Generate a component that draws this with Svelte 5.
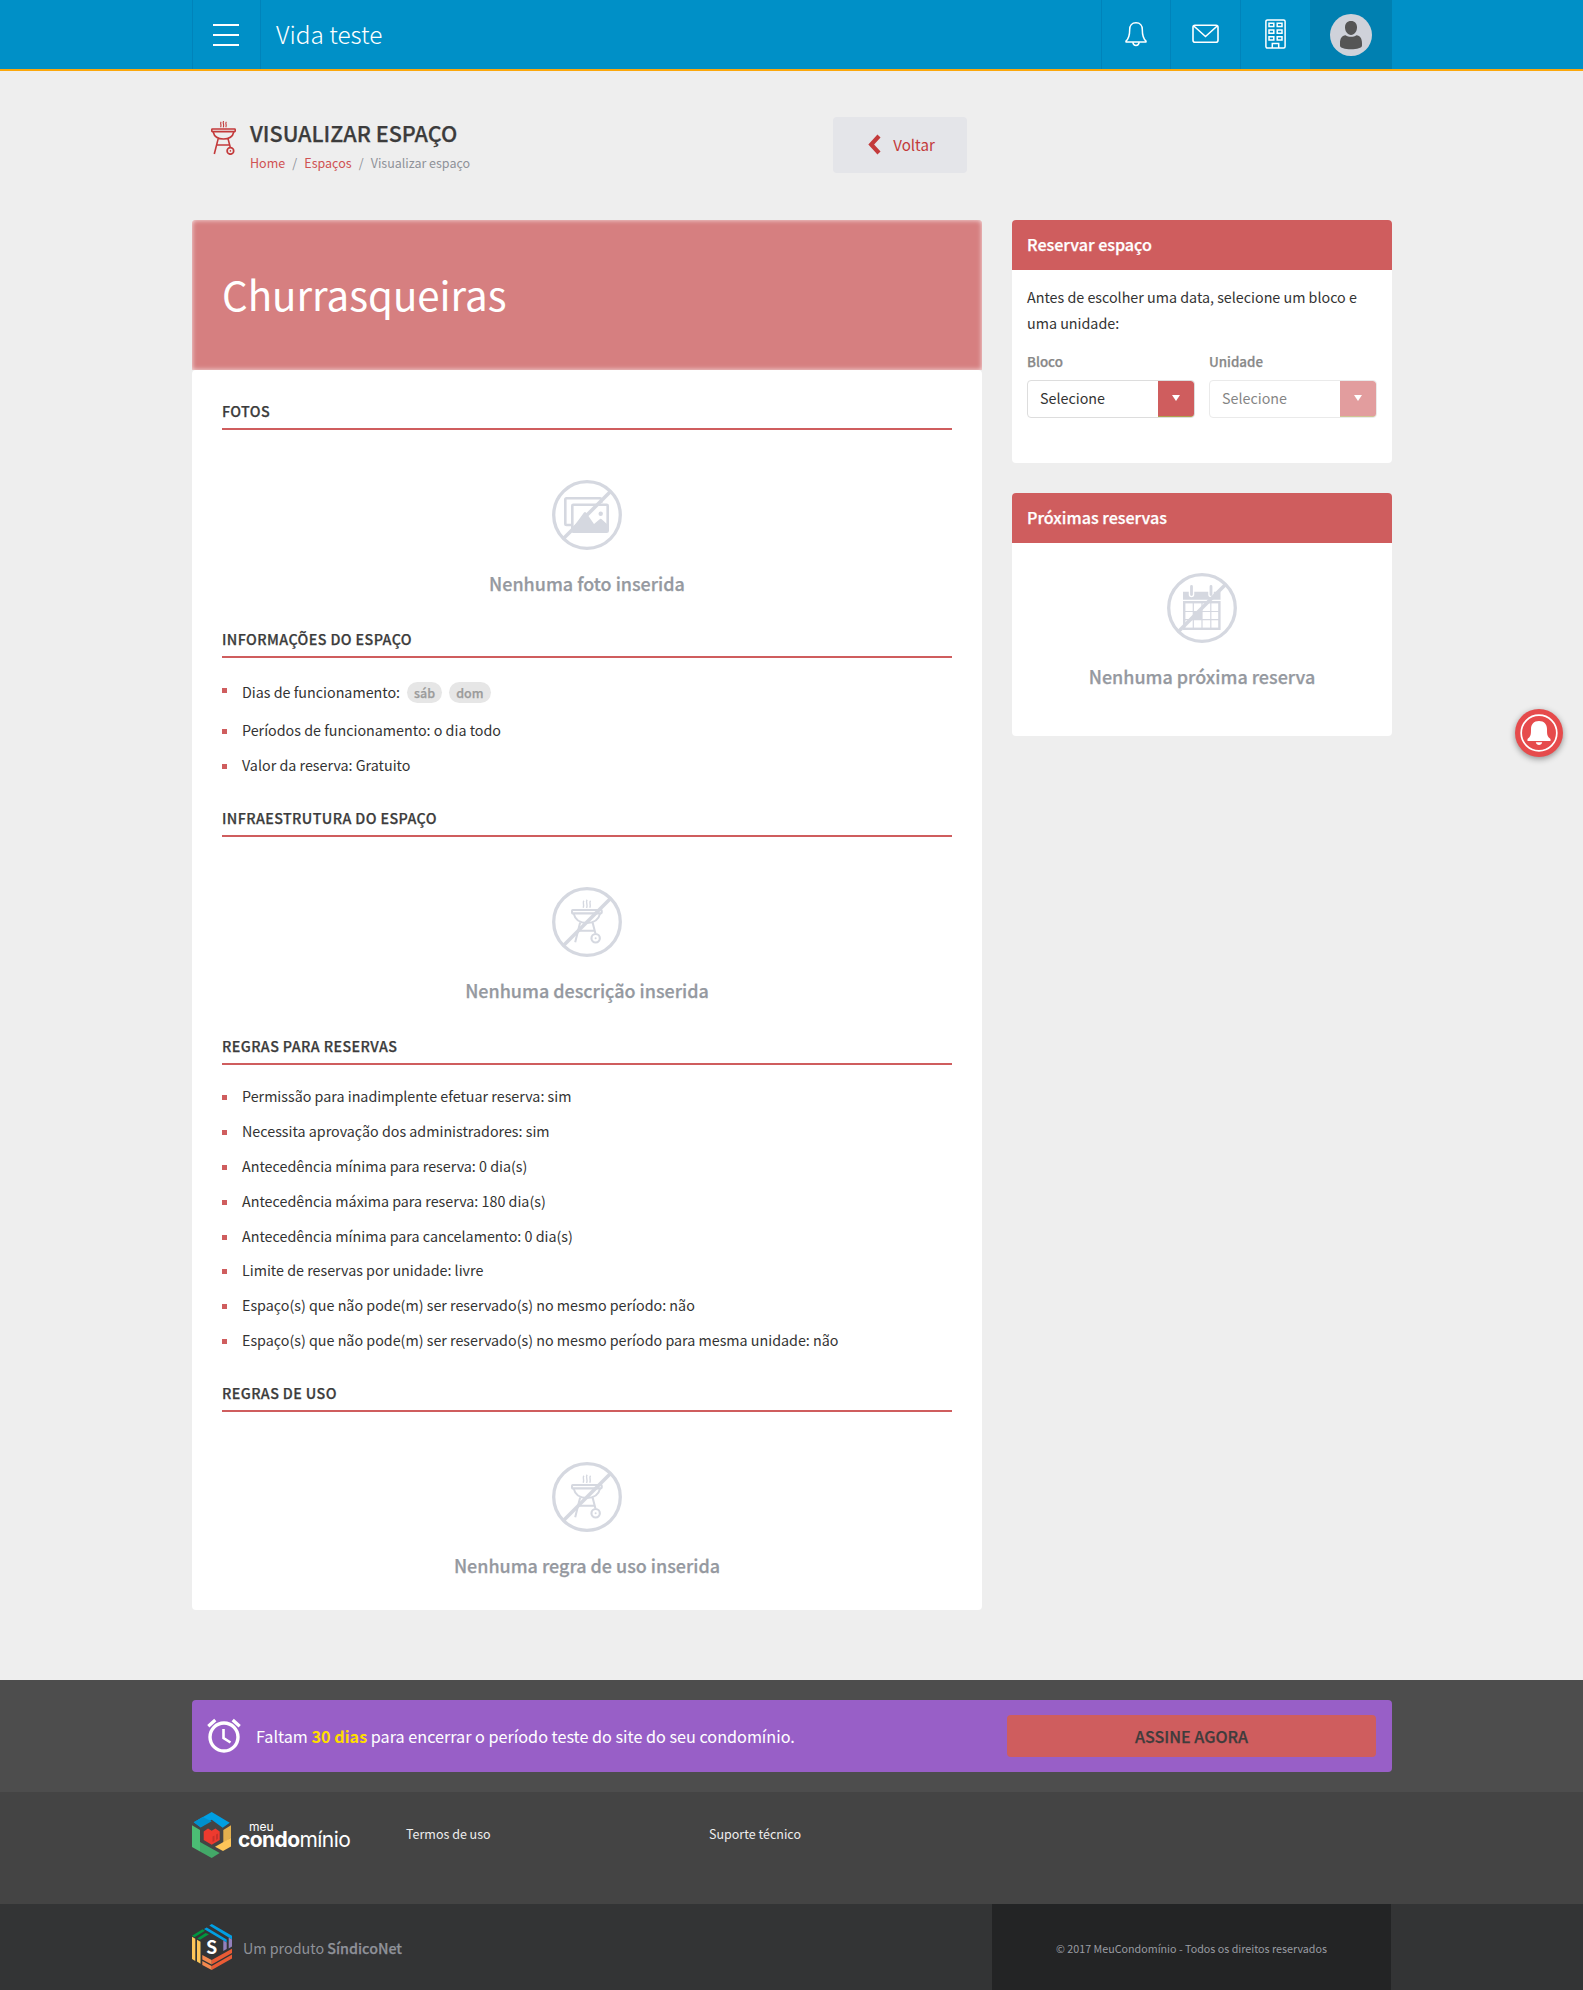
<script>
  const rules = [
    'Permissão para inadimplente efetuar reserva: sim',
    'Necessita aprovação dos administradores: sim',
    'Antecedência mínima para reserva: 0 dia(s)',
    'Antecedência máxima para reserva: 180 dia(s)',
    'Antecedência mínima para cancelamento: 0 dia(s)',
    'Limite de reservas por unidade: livre',
    'Espaço(s) que não pode(m) ser reservado(s) no mesmo período: não',
    'Espaço(s) que não pode(m) ser reservado(s) no mesmo período para mesma unidade: não'
  ];
  const days = ['sáb', 'dom'];
</script>

{#snippet grill()}
  <g fill="none" stroke="currentColor" stroke-width="1.6">
    <path d="M10.200 .8c-1.500 1.500.6 2.700-.6 5.400M12.700 0c-1.500 1.900.8 3.200-.4 6.400M15.400 .8c-1.500 1.500.6 2.700-.6 5.400" stroke-width="1.100" />
    <rect x=".8" y="8" width="23.4" height="2.6" rx=".6" />
    <path d="M2.2 11c1 4.4 4.600 7 10.300 7s9.300-2.600 10.300-7" />
    <path d="M7.200 17.600L3.300 33M17 17.600l2.200 8.400M6 24h12.600" />
    <circle cx="19.400" cy="29.900" r="3.300" stroke-width="1.700" />
  </g>
  <circle cx="19.4" cy="29.9" r=".8" fill="currentColor" />
{/snippet}

{#snippet empty(kind, label)}
  <div class="empty">
    <svg width="70" height="70" viewBox="0 0 70 70" color="#d5d8e0">
      {#if kind === 'photo'}
        <path d="M19 45h-4.500q-1.200 0-1.200-1.200V19.500q0-1.200 1.200-1.200H48q1.200 0 1.200 1.200V23" fill="none" stroke="currentColor" stroke-width="2.600" />
        <rect x="20.300" y="24.700" width="35.400" height="27" rx="1" fill="#fff" stroke="currentColor" stroke-width="2.600" />
        <path d="M20 49L32 32.500q1-.8 2 0L42 44l6-5q.7-.5 1.400 0L56 45v7H20z" fill="currentColor" />
        <circle cx="48.700" cy="33.700" r="2.200" fill="currentColor" />
      {:else if kind === 'calendar'}
        <path d="M16 18.700h37.500v8H16z" fill="currentColor" />
        <path d="M24.500 13.500v8M44 13.500v8" stroke="#fff" stroke-width="5.500" stroke-linecap="round" />
        <path d="M24.500 13.500v8M44 13.500v8" stroke="currentColor" stroke-width="2.800" stroke-linecap="round" />
        <rect x="17.200" y="29.200" width="35.200" height="26.600" fill="none" stroke="currentColor" stroke-width="2.400" />
        <path d="M26.300 29v27M35 29v27M43.800 29v27M17 38.500h36M17 46.600h36" stroke="currentColor" stroke-width="1.200" />
        <path d="M26.300 38.500H35v8.100h-8.700z" fill="currentColor" />
      {:else}
        <g transform="translate(19 12.700) scale(1.270 1.290)">{@render grill()}</g>
      {/if}
      <circle cx="35" cy="35" r="33.300" fill="none" stroke="currentColor" stroke-width="3.300" />
      <path d="M11.500 58.500l47-47" stroke="currentColor" stroke-width="3.500" />
    </svg>
    <p>{label}</p>
  </div>
{/snippet}

<header class="top">
  <div class="wrap bar">
    <button class="menu" aria-label="Menu"><i></i><i></i><i></i></button>
    <div class="site">Vida teste</div>
    <nav class="tools">
      <a class="tool" href="#a" aria-label="Avisos">
        <svg width="22" height="26" viewBox="0 0 22 26" fill="none" stroke="#fff" stroke-width="1.500" stroke-linejoin="round">
          <path d="M11 1.800c-4.200 0-6.300 3-6.300 6.600 0 6-.7 9-3.700 11.600v1h20v-1c-3-2.600-3.700-5.600-3.700-11.600 0-3.600-2.100-6.600-6.300-6.600z" />
          <path d="M7.800 21.200c.3 2.100 1.500 3.300 3.200 3.300s2.900-1.200 3.200-3.300" />
        </svg>
      </a>
      <a class="tool" href="#m" aria-label="Mensagens">
        <svg width="27" height="20" viewBox="0 0 27 20" fill="none" stroke="#fff" stroke-width="1.600">
          <rect x="1" y="1.300" width="25" height="17" rx="2" />
          <path d="M1.800 2l11.700 10.500L25.200 2" />
        </svg>
      </a>
      <a class="tool" href="#b" aria-label="Condomínio">
        <svg width="21" height="30" viewBox="0 0 21 30" fill="none" stroke="#fff" stroke-width="1.500">
          <rect x=".9" y=".9" width="19.200" height="28.200" rx="1.500" />
          <path d="M4 4.200h4.800v3.300H4zM12.200 4.200H17v3.300h-4.800zM4 11h4.800v3.300H4zM12.200 11H17v3.300h-4.800zM4 17.800h4.800v3.300H4zM12.200 17.800H17v3.300h-4.800zM7.300 29v-4.500h6.400V29" />
        </svg>
      </a>
      <a class="tool user" href="#u" aria-label="Perfil">
        <svg width="42" height="42" viewBox="0 0 42 42">
          <circle cx="21" cy="21" r="21" fill="#cfd2da" />
          <path d="M21 7c3.800 0 6 2.600 6 6.300 0 4-2.500 7.700-6 7.700s-6-3.700-6-7.700C15 9.600 17.200 7 21 7z" fill="#555" />
          <path d="M15.600 21.300c3 2 7.800 2 10.800 0 4 .6 5.600 3.400 5.600 8v2.200c0 2.500-5 3.700-11 3.700s-11-1.200-11-3.700v-2.200c0-4.600 1.600-7.400 5.600-8z" fill="#555" />
        </svg>
      </a>
    </nav>
  </div>
</header>

<main class="wrap">
  <div class="heading">
    <svg class="page-icon" width="25" height="34" viewBox="0 0 25 34">{@render grill()}</svg>
    <div class="titles">
      <h1>VISUALIZAR ESPAÇO</h1>
      <div class="crumbs"><a href="#h">Home</a><span>/</span><a href="#e">Espaços</a><span>/</span>Visualizar espaço</div>
    </div>
    <a class="back" href="#v">
      <svg width="13" height="21" viewBox="0 0 13 21"><path d="M11 2L3.200 10.500 11 19" fill="none" stroke="#c33a3b" stroke-width="4.200" /></svg>
      Voltar
    </a>
  </div>

  <div class="columns">
    <article>
      <div class="hero">Churrasqueiras</div>
      <div class="content">
        <h2>FOTOS</h2>
        {@render empty('photo', 'Nenhuma foto inserida')}

        <h2>INFORMAÇÕES DO ESPAÇO</h2>
        <ul>
          <li class="days">Dias de funcionamento: {#each days as d}<span class="pill">{d}</span>{/each}</li>
          <li>Períodos de funcionamento: o dia todo</li>
          <li>Valor da reserva: Gratuito</li>
        </ul>

        <h2>INFRAESTRUTURA DO ESPAÇO</h2>
        {@render empty('grill', 'Nenhuma descrição inserida')}

        <h2>REGRAS PARA RESERVAS</h2>
        <ul>
          {#each rules as r}<li>{r}</li>{/each}
        </ul>

        <h2>REGRAS DE USO</h2>
        {@render empty('grill', 'Nenhuma regra de uso inserida')}
      </div>
    </article>

    <aside>
      <section class="panel">
        <h3>Reservar espaço</h3>
        <div class="form">
          <p>Antes de escolher uma data, selecione um bloco e uma unidade:</p>
          <div class="fields">
            <div class="field">
              <span class="label">Bloco</span>
              <div class="select"><span>Selecione</span><b><i></i></b></div>
            </div>
            <div class="field">
              <span class="label">Unidade</span>
              <div class="select off"><span>Selecione</span><b><i></i></b></div>
            </div>
          </div>
        </div>
      </section>
      <section class="panel next">
        <h3>Próximas reservas</h3>
        {@render empty('calendar', 'Nenhuma próxima reserva')}
      </section>
    </aside>
  </div>
</main>

<footer>
  <div class="trial">
    <div class="wrap banner">
      <svg width="34" height="35" viewBox="0 0 34 35" fill="none" stroke="#fff">
        <circle cx="17" cy="19" r="14" stroke-width="3.400" />
        <path d="M1.300 8.300l7-6.300M32.700 8.300l-7-6.300" stroke-width="3.300" />
        <path d="M16.500 11v9l7 4.500" stroke-width="2.600" />
      </svg>
      <p>Faltam <strong>30 dias</strong> para encerrar o período teste do site do seu condomínio.</p>
      <a class="cta" href="#s">ASSINE AGORA</a>
    </div>
  </div>
  <div class="links">
    <div class="wrap linkrow">
      <div class="brand">
        <svg width="40" height="46" viewBox="0 0 40 46">
          <path d="M1.700 10.300L19.700 0l18 10.700-7 5-11-7.900-11 7.500z" fill="#009fe3" />
          <path d="M1.700 10.300l9-5.200 9 4.200-11 6.200z" fill="#0090ce" />
          <path d="M0 13.300L8 18v21.500L0 35z" fill="#4bbd74" />
          <path d="M8 30l19.700 11-8 5L8 39.500z" fill="#43a868" />
          <path d="M31.300 18l7.700-4.700v12.500l-7.700 5.200z" fill="#e2b04e" />
          <path d="M39 25.800v8.700L31 39l-8-4.300z" fill="#fdc558" />
          <path d="M11.700 19.500l4.300-3 3.700 2.300 3.700-2.300 4.300 3V28l-8 4.700-8-4.700z" fill="#ee3a2e" />
          <path d="M20.500 24.500l2-1v5.500l-2 1zM24 22.500l2-1v5.500l-2 1z" fill="#c8302a" />
        </svg>
        <div class="word">
          <span class="small">meu</span>
          <span class="large"><b>condo</b>mínio</span>
        </div>
      </div>
      <a href="#t">Termos de uso</a>
      <a href="#st">Suporte técnico</a>
    </div>
  </div>
  <div class="legal">
    <div class="wrap legalrow">
      <svg width="40" height="46" viewBox="0 0 40 46">
        <path d="M0 11.700L10.500 5.300 13 6.800 2.500 13.300zM5.200 14.500L13.500 9l3.500 1.200-9 5.600z" fill="#009640" />
        <path d="M0 12.700l3.300 2V37L0 35zM5 15.700l3.500 2v22L5 37.500z" fill="#fdc558" />
        <path d="M17.300 1.500L19.800 0 40 11.700v3.800zM12 5l2.700-1.600L34.700 15.500v3z" fill="#009fe3" />
        <path d="M31.300 16.500l3.400 2V25l-3.400 2zM36.700 13.500l3.300 2v7l-3.300 2z" fill="#9280bd" />
        <path d="M19.700 36L40 24.800V29L19.700 40.500zM19.700 42L40 30.500v4L19.700 46z" fill="#ea5b35" />
        <path d="M10.300 31l9.400 5v4.500l-9.400-5zM10.300 37l9.400 5v4l-9.400-5z" fill="#f3894f" />
        <text class="mono" x="19.700" y="29.800" font-size="18" text-anchor="middle">S</text>
      </svg>
      <p>Um produto <strong>SíndicoNet</strong></p>
      <div class="copy">© 2017 MeuCondomínio - Todos os direitos reservados</div>
    </div>
  </div>
</footer>

<button class="float" aria-label="Notificações">
  <svg width="48" height="48" viewBox="0 0 48 48">
    <circle cx="24" cy="24" r="17.800" fill="none" stroke="#fff" stroke-width="1.700" />
    <path d="M24 12c-5.200 0-8 3.400-8 8 0 6-.3 7.500-3.500 10v2h23v-2c-3.200-2.500-3.500-4-3.500-10 0-4.600-2.800-8-8-8z" fill="#fff" />
    <path d="M20.800 33.300h6.400c-.4 1.800-1.600 2.700-3.200 2.700s-2.800-.9-3.200-2.700z" fill="#fff" />
  </svg>
</button>

<style>
  :global(body) {
    margin: 0;
    background: #eee;
    color: #333;
    font: 14.3px/24.8px 'Noto Sans CJK JP', 'Noto Sans', sans-serif;
  }
  :global(#app) { position: relative; }
  a { color: inherit; text-decoration: none; }
  p, h1, h2, h3, ul { margin: 0; padding: 0; }
  svg { display: block; flex: none; }
  button { border: 0; padding: 0; }
  .wrap { width: 1200px; margin: 0 auto; box-sizing: border-box; position: relative; left: .5px; }

  /* Demi-bold: the medium cut, thickened slightly */
  h1, h2, h3, .empty p, .label, .pill, .cta, .legalrow strong { font-weight: 500; -webkit-text-stroke: .25px currentColor; }

  .top { background: #0090c7; border-bottom: 2px solid #fba70b; }
  .bar { display: flex; height: 69px; }
  .menu {
    width: 69px; box-sizing: border-box; background: none;
    border: solid #0083ba; border-width: 0 1px;
    display: flex; flex-direction: column; justify-content: center; align-items: center; gap: 8px;
  }
  .menu i { width: 26px; height: 2px; background: #fff; margin-right: 1px; }
  .site { margin-left: 15px; color: #fff; font-size: 24.4px; font-weight: 300; line-height: 67px; }
  .tools { display: flex; margin-left: auto; }
  .tool {
    width: 70px; height: 69px; box-sizing: border-box; border-left: 1px solid #0083ba;
    display: flex; align-items: center; justify-content: center; padding-bottom: 1px;
  }
  .tool:first-child { width: 69px; }
  .tool.user { width: 82px; border: 0; background: #0080b1; padding: 1px 0 0 0; }

  .heading { display: flex; align-items: flex-start; padding: 46px 0 47px 19px; height: 56px; }
  .page-icon { color: #c33a3b; margin: 4px 14px 0 0; }
  .titles { flex: 1; }
  h1 { font-size: 21.600px; line-height: 32px; color: #3c3c3c; }
  .crumbs { font-size: 12.500px; line-height: 20px; margin-top: 4px; color: #8f9299; }
  .crumbs a { color: #d05253; }
  .crumbs span { margin: 0 7.100px; }
  .back {
    width: 134px; height: 56px; border-radius: 4px; background: #e4e5e9; margin-right: 425px;
    display: flex; align-items: center; justify-content: center; gap: 12px;
    font-size: 15.100px; color: #c33a3b; box-sizing: border-box; padding: 0 0 2px 3px;
  }

  .columns { display: flex; gap: 30px; align-items: flex-start; }
  article { width: 790px; }
  .hero {
    height: 150px; box-sizing: border-box; padding-left: 30px; border-radius: 4px 4px 0 0;
    background: #d67f80; box-shadow: inset 0 0 5px rgba(255, 255, 255, .8);
    color: #fff; font-size: 40.200px; line-height: 148px;
  }
  .content { background: #fff; border-radius: 4px; padding: 29px 30px 1px; }
  h2 {
    font-size: 14.300px; letter-spacing: .4px; line-height: 24px; color: #3c3c3c;
    padding-bottom: 5px; border-bottom: 2px solid #cf5d5e;
  }
  .empty { padding: 50px 0 30px; display: flex; flex-direction: column; align-items: center; }
  .empty p { margin-top: 19px; font-size: 17.950px; line-height: 28px; color: #9599a0; }
  ul { list-style: none; padding: 14.200px 0 22.920px; }
  li { height: 34.860px; display: flex; align-items: center; }
  li::before { content: ''; width: 5px; height: 5px; margin: 2px 15px 0 0; background: #cf5d5e; }
  li.days { height: 41.160px; }
  li.days::before { margin-top: -4px; }
  .pill {
    background: #e6e6e6; color: #9b9b9b; font-size: 12.500px; line-height: 21px; height: 21px;
    padding: 0 7px; border-radius: 11px; margin-left: 7px;
  }

  aside { width: 380px; display: flex; flex-direction: column; gap: 30px; }
  .panel { background: #fff; border-radius: 4px; height: 243px; overflow: hidden; }
  h3 { background: #cf5d5e; color: #fff; font-size: 16.100px; line-height: 49px; height: 50px; padding-left: 15px; }
  .form { padding: 14px 15px; }
  .form p { line-height: 26px; }
  .fields { display: flex; gap: 14px; margin-top: 15px; }
  .field { width: 168px; }
  .label { display: block; font-size: 13.350px; line-height: 22px; color: #888; }
  .select {
    display: flex; justify-content: space-between; height: 38px; box-sizing: border-box; margin-top: 7px;
    border: 1px solid #ddd; border-radius: 4px; overflow: hidden; line-height: 34px;
  }
  .select span { padding-left: 12px; }
  .select.off { opacity: .6; }
  .select b { width: 36px; background: #cf5d5e; border-bottom: 1px solid #b0a04e; border-radius: 0 3px 3px 0; display: flex; align-items: center; justify-content: center; }
  .select i { border: solid transparent; border-width: 6px 4.500px 0; border-top-color: #fff; margin-bottom: 1px; }
  .next .empty { padding-top: 30px; }

  .trial { background: #4d4d4d; padding: 20px 0; margin-top: 70px; }
  .banner {
    height: 72px; border-radius: 4px; background: #985fc7; color: #fff; padding: 0 16px 0 15px;
    display: flex; align-items: center; font-size: 16.200px;
  }
  .banner p { margin: 0 auto 0 15px; }
  .banner strong { color: #fd0; font-weight: 700; }
  .cta {
    width: 369px; height: 42px; line-height: 42px; border-radius: 4px; background: #cf5d5e; color: #3f3c3c;
    text-align: center; font-size: 16.100px;
  }
  .links { background: #444; height: 112px; }
  .linkrow { display: grid; grid-template-columns: 214px 303px 1fr; padding-top: 20px; font-size: 12.500px; line-height: 43px; color: #eee; }
  .brand { display: flex; gap: 6px; height: 46px; }
  .word { display: flex; flex-direction: column; color: #fff; font-family: Inter, sans-serif; padding-top: 8px; white-space: nowrap; }
  .small { font-size: 12px; line-height: 14px; margin-left: 11px; }
  .large { font-size: 21px; line-height: 18px; margin-top: -3px; letter-spacing: -.58px; }
  .large b { font-weight: 700; }
  .legal { background: #333435; }
  .legalrow { display: flex; align-items: center; height: 86px; color: #8f9299; }
  .legalrow p { margin: 0 auto 0 11px; padding-top: 2px; }
  .mono { font-family: 'Noto Sans CJK JP', sans-serif; font-weight: 700; fill: #fff; }
  .copy {
    width: 399px; height: 86px; line-height: 89px; margin-right: 1px; background: #232425; color: #9a9da3;
    text-align: center; font-size: 10.720px;
  }
  .float {
    position: absolute; right: 20px; top: 709px; width: 48px; height: 48px; border-radius: 50%;
    background: #e64b4c; box-shadow: 0 2px 6px rgba(0, 0, 0, .4);
  }
</style>
